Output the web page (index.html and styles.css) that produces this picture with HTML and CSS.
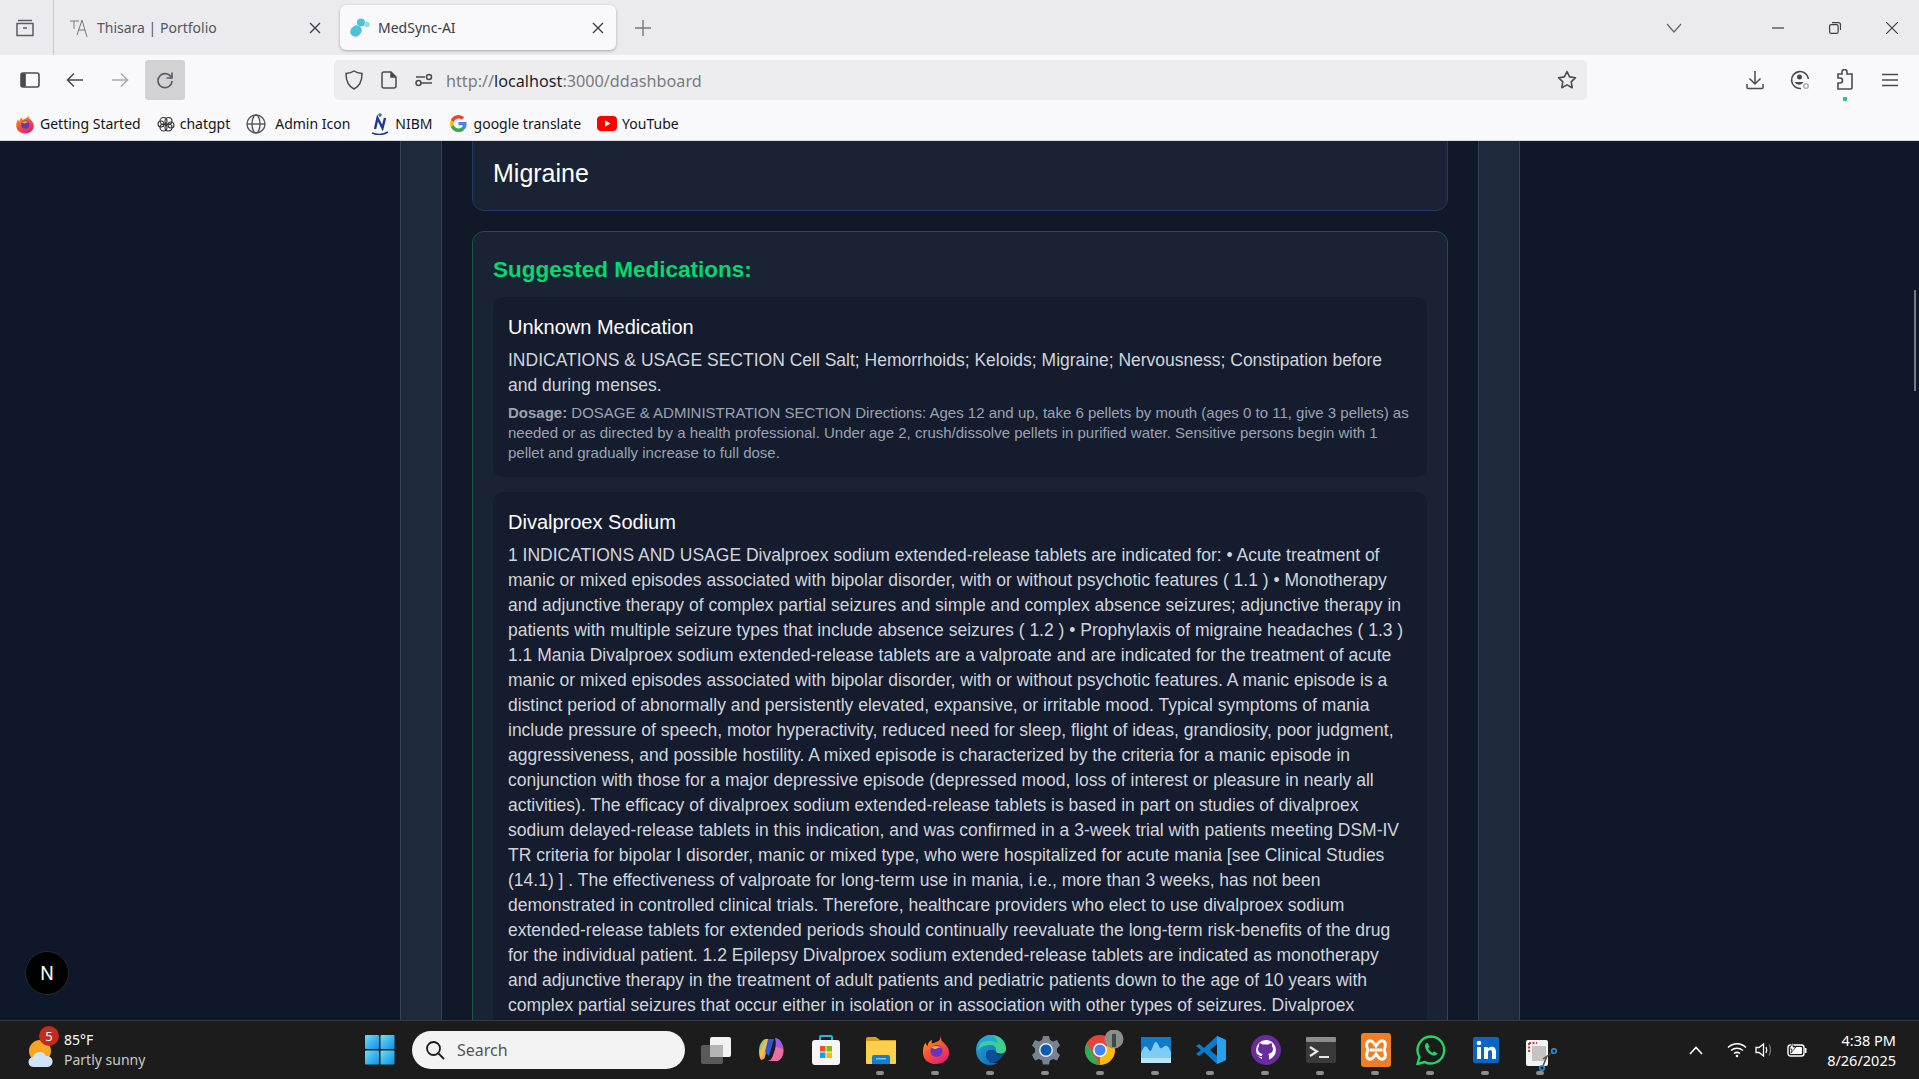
FILE: index.html
```html
<!DOCTYPE html>
<html lang="en">
<head>
    <meta charset="UTF-8">
    <meta name="viewport" content="width=device-width, initial-scale=1.0">
    <title>MedSync-AI</title>
    <link rel="stylesheet" href="styles.css">
</head>
<body>
    <svg class="defs" width="0" height="0">
        <defs>
            <linearGradient id="ffBody" x1="0" y1="0" x2="0.6" y2="1">
                <stop offset="0" stop-color="#ffb02e"/><stop offset="0.5" stop-color="#ff5a2c"/><stop offset="1" stop-color="#e3246a"/>
            </linearGradient>
            <linearGradient id="winTile" x1="0" y1="0" x2="1" y2="1">
                <stop offset="0" stop-color="#6fdcf5"/><stop offset="1" stop-color="#0f8fe8"/>
            </linearGradient>
            <linearGradient id="copilot" x1="0" y1="0" x2="1" y2="1">
                <stop offset="0" stop-color="#2fb5e8"/><stop offset="0.45" stop-color="#f4c63a"/><stop offset="1" stop-color="#e85fa4"/>
            </linearGradient>
            <linearGradient id="edgeBody" x1="0" y1="0" x2="1" y2="1">
                <stop offset="0" stop-color="#28a7e0"/><stop offset="1" stop-color="#0a5fb0"/>
            </linearGradient>
            <symbol id="firefox" viewBox="0 0 32 32">
                <path d="M21 1c1 3 0 5 3 7 3 3 6 6 6 11 0 7-6 12-14 12S2 26 2 18c0-4 1-7 3-10 0 2 1 3 2 4 0-3 2-6 5-7-1 2-1 3 0 4 3-1 5-2 7-3 2-2 2-3 2-5z" fill="url(#ffBody)"/>
                <circle cx="16.500" cy="17" r="6.500" fill="#6a33c2"/>
                <path d="M11 13c3-2 8-2 11 1-3-1-5 0-6 1-2 0-4-1-5-2z" fill="#ffa436"/>
            </symbol>
        </defs>
    </svg>

    <div class="screen">
        <!-- tab strip -->
        <header class="tabstrip">
            <div class="tabs-menu">
                <svg width="20" height="20" viewBox="0 0 20 20" fill="none" stroke="#5b5b66" stroke-width="1.500"><path d="M3 2.500h14M2 5.500h16v12H2z"/><path d="M8 10h4"/></svg>
            </div>
            <div class="tab">
                <svg class="tab-icon" width="20" height="20" viewBox="0 0 20 20" fill="none" stroke="#77777f" stroke-width="1"><path d="M1 3h9M5 3v8M13 2 8 17M13 2l5 17M9 12h7"/></svg>
                <span class="tab-title">Thisara | Portfolio</span>
                <svg class="tab-close" width="12" height="12" viewBox="0 0 12 12" stroke="#3d3d45" stroke-width="1.400"><path d="M1 1l10 10M11 1 1 11"/></svg>
            </div>
            <div class="tab tab-active">
                <svg class="tab-icon" width="20" height="20" viewBox="0 0 20 20" fill="#4fc0dc"><rect x="0" y="8" width="12" height="10" rx="5" transform="rotate(-40 6 13)"/><circle cx="11" cy="4.500" r="4"/><circle cx="17" cy="6.500" r="2.700" fill="#8fdcea"/></svg>
                <span class="tab-title">MedSync-AI</span>
                <svg class="tab-close" width="12" height="12" viewBox="0 0 12 12" stroke="#3d3d45" stroke-width="1.400"><path d="M1 1l10 10M11 1 1 11"/></svg>
            </div>
            <svg class="new-tab" width="16" height="16" viewBox="0 0 16 16" stroke="#77777f" stroke-width="1.400"><path d="M8 0v16M0 8h16"/></svg>
            <div class="strip-spacer"></div>
            <svg class="tab-list" width="16" height="10" viewBox="0 0 16 10" fill="none" stroke="#6b6b74" stroke-width="1.400"><path d="M1 1l7 8 7-8"/></svg>
            <div class="win-controls">
                <svg width="12" height="12" viewBox="0 0 12 12" stroke="#3d3d45" stroke-width="1.200"><path d="M0 6h12"/></svg>
                <svg width="12" height="12" viewBox="0 0 12 12" fill="none" stroke="#3d3d45" stroke-width="1.200"><rect x="0.600" y="2.600" width="8.500" height="8.800" rx="1.500"/><path d="M3 .7h6.500a2 2 0 0 1 2 2V8"/></svg>
                <svg width="12" height="12" viewBox="0 0 12 12" stroke="#3d3d45" stroke-width="1.200"><path d="M0 0l12 12M12 0 0 12"/></svg>
            </div>
        </header>

        <!-- toolbar -->
        <div class="toolbar">
            <div class="nav-buttons">
                <span class="nav-btn"><svg width="20" height="16" viewBox="0 0 20 16" fill="none" stroke="#4a4a52" stroke-width="1.600"><rect x="1" y="1" width="18" height="14" rx="2"/><path d="M2 2h3v12H2z" fill="#4a4a52"/></svg></span>
                <span class="nav-btn"><svg width="18" height="16" viewBox="0 0 18 16" fill="none" stroke="#4a4a52" stroke-width="1.600"><path d="M17 8H2M8 1.500 1.500 8 8 14.500"/></svg></span>
                <span class="nav-btn"><svg width="18" height="16" viewBox="0 0 18 16" fill="none" stroke="#a9a9ae" stroke-width="1.600"><path d="M1 8h15M10 1.500 16.500 8 10 14.500"/></svg></span>
                <span class="nav-btn nav-btn-on"><svg width="18" height="18" viewBox="0 0 18 18" fill="none" stroke="#5b5b66" stroke-width="1.600"><path d="M15.500 7A7 7 0 1 0 16 10"/><path d="M16 1.500V7h-5.500"/></svg></span>
            </div>
            <div class="urlbar">
                <svg class="url-icon" width="18" height="20" viewBox="0 0 18 20" fill="none" stroke="#4a4a52" stroke-width="1.500"><path d="M9 1c2 1.500 5 2.300 8 2.500 0 7-2 12.500-8 15.500C3 16 1 10.500 1 3.500 4 3.300 7 2.500 9 1z"/></svg>
                <svg class="url-icon" width="16" height="18" viewBox="0 0 16 18" fill="none" stroke="#4a4a52" stroke-width="1.500"><path d="M3 1h7l5 5v9a2 2 0 0 1-2 2H3a2 2 0 0 1-2-2V3a2 2 0 0 1 2-2z"/><path d="M10 1v5h5" fill="#4a4a52"/></svg>
                <svg class="url-icon" width="18" height="14" viewBox="0 0 18 14" fill="none" stroke="#4a4a52" stroke-width="1.500"><path d="M1 4h9M6 10h11"/><circle cx="14" cy="4" r="2.500"/><circle cx="3.500" cy="10" r="2.500"/></svg>
                <span class="url-text">http://<span class="url-host">localhost</span>:3000/ddashboard</span>
                <svg class="url-star" width="20" height="20" viewBox="0 0 20 20" fill="none" stroke="#4a4a52" stroke-width="1.600" stroke-linejoin="round"><path d="M10 1.500l2.600 5.400 5.900.8-4.300 4.100 1 5.900L10 14.900l-5.200 2.800 1-5.900L1.500 7.700l5.900-.8z"/></svg>
            </div>
            <div class="tool-right">
                <svg width="20" height="20" viewBox="0 0 20 20" fill="none" stroke="#4a4a52" stroke-width="1.500"><path d="M10 1v13M4.500 8.500 10 14l5.500-5.500M2 14v3.500a1 1 0 0 0 1 1h14a1 1 0 0 0 1-1V14"/></svg>
                <svg width="20" height="20" viewBox="0 0 20 20" fill="none" stroke="#4a4a52" stroke-width="1.600"><path d="M11 18.500a8.500 8.500 0 1 1 7.500-9.500"/><circle cx="9.500" cy="7" r="2.500" fill="#4a4a52" stroke="none"/><path d="M4.500 12h9a5 5 0 0 1-9 0z" fill="#4a4a52" stroke="none"/><circle cx="16" cy="16" r="2.300" stroke="#b4b4b8"/></svg>
                <div class="ext-btn">
                    <svg width="20" height="22" viewBox="0 0 20 22" fill="none" stroke="#4a4a52" stroke-width="1.600"><path d="M3 5h4V3a2.500 2.500 0 0 1 5 0v2h5v14a1 1 0 0 1-1 1H3v-6h2a2.500 2.500 0 0 0 0-5H3z"/></svg>
                    <span class="ext-dot"></span>
                </div>
                <svg width="20" height="14" viewBox="0 0 20 14" stroke="#4a4a52" stroke-width="1.500"><path d="M2 1.500h16M2 7h16M2 12.500h16"/></svg>
            </div>
        </div>

        <!-- bookmarks -->
        <nav class="bookmarks">
            <a class="bookmark"><svg width="20" height="20"><use href="#firefox"/></svg>Getting Started</a>
            <a class="bookmark"><svg width="18" height="18" viewBox="0 0 18 18" fill="none" stroke="#333" stroke-width="1.100"><circle cx="6.500" cy="6" r="3.500"/><circle cx="11.500" cy="6" r="3.500"/><circle cx="14" cy="10" r="3"/><circle cx="11.500" cy="12.500" r="3.500"/><circle cx="6.500" cy="12.500" r="3.500"/><circle cx="4" cy="9" r="3"/></svg>chatgpt</a>
            <a class="bookmark bookmark-wide"><svg width="20" height="20" viewBox="0 0 20 20" fill="none" stroke="#55555e" stroke-width="1.400"><circle cx="10" cy="10" r="9"/><ellipse cx="10" cy="10" rx="4" ry="9"/><path d="M1 10h18"/></svg>Admin Icon</a>
            <a class="bookmark bookmark-nibm"><svg width="20" height="22" viewBox="0 0 20 22" fill="none"><path d="M10 0v4M8 2h4" stroke="#1d3a8f"/><path d="M2 20c5 2 11 2 16-1" stroke="#1d3a8f" stroke-width="1.500"/><path d="M5 16 7.500 5 12.500 15 15 5" stroke="#1d3a8f" stroke-width="2.400"/></svg>NIBM</a>
            <a class="bookmark bookmark-google"><svg width="17" height="17" viewBox="0 0 18 18"><path d="M17.600 9.200c0-.6-.1-1.200-.2-1.800H9v3.400h4.800a4.100 4.100 0 0 1-1.800 2.700v2.200h2.900c1.700-1.600 2.700-3.900 2.700-6.500z" fill="#4285f4"/><path d="M9 18c2.400 0 4.500-.8 5.900-2.200L12 13.500c-.8.500-1.800.9-3 .9-2.300 0-4.300-1.600-5-3.700H1v2.300A9 9 0 0 0 9 18z" fill="#34a853"/><path d="M4 10.700a5.400 5.400 0 0 1 0-3.400V5H1a9 9 0 0 0 0 8z" fill="#fbbc05"/><path d="M9 3.600c1.300 0 2.500.5 3.400 1.300L15 2.400A9 9 0 0 0 1 5l3 2.300c.7-2.100 2.700-3.700 5-3.700z" fill="#ea4335"/></svg>google translate</a>
            <a class="bookmark"><svg width="20" height="15" viewBox="0 0 20 15"><rect width="20" height="15" rx="4" fill="#f00"/><path d="M8 4.300v6.400l5.500-3.200z" fill="#fff"/></svg>YouTube</a>
        </nav>

        <!-- page -->
        <main class="viewport">
            <div class="page-frame">
                <div class="page-inner">
                    <section class="card card-blue">
                        <h2 class="diagnosis">Migraine</h2>
                    </section>
                    <section class="card card-green">
                        <h3 class="card-heading">Suggested Medications:</h3>
                        <article class="med">
                            <h4 class="med-name">Unknown Medication</h4>
                            <p class="med-desc">INDICATIONS &amp; USAGE SECTION Cell Salt; Hemorrhoids; Keloids; Migraine; Nervousness; Constipation before and during menses.</p>
                            <p class="med-dose"><strong>Dosage:</strong> DOSAGE &amp; ADMINISTRATION SECTION Directions: Ages 12 and up, take 6 pellets by mouth (ages 0 to 11, give 3 pellets) as needed or as directed by a health professional. Under age 2, crush/dissolve pellets in purified water. Sensitive persons begin with 1 pellet and gradually increase to full dose.</p>
                        </article>
                        <article class="med">
                            <h4 class="med-name">Divalproex Sodium</h4>
                            <p class="med-desc">1 INDICATIONS AND USAGE Divalproex sodium extended-release tablets are indicated for: • Acute treatment of manic or mixed episodes associated with bipolar disorder, with or without psychotic features ( 1.1 ) • Monotherapy and adjunctive therapy of complex partial seizures and simple and complex absence seizures; adjunctive therapy in patients with multiple seizure types that include absence seizures ( 1.2 ) • Prophylaxis of migraine headaches ( 1.3 ) 1.1 Mania Divalproex sodium extended-release tablets are a valproate and are indicated for the treatment of acute manic or mixed episodes associated with bipolar disorder, with or without psychotic features. A manic episode is a distinct period of abnormally and persistently elevated, expansive, or irritable mood. Typical symptoms of mania include pressure of speech, motor hyperactivity, reduced need for sleep, flight of ideas, grandiosity, poor judgment, aggressiveness, and possible hostility. A mixed episode is characterized by the criteria for a manic episode in conjunction with those for a major depressive episode (depressed mood, loss of interest or pleasure in nearly all activities). The efficacy of divalproex sodium extended-release tablets is based in part on studies of divalproex sodium delayed-release tablets in this indication, and was confirmed in a 3-week trial with patients meeting DSM-IV TR criteria for bipolar I disorder, manic or mixed type, who were hospitalized for acute mania [see Clinical Studies (14.1) ] . The effectiveness of valproate for long-term use in mania, i.e., more than 3 weeks, has not been demonstrated in controlled clinical trials. Therefore, healthcare providers who elect to use divalproex sodium extended-release tablets for extended periods should continually reevaluate the long-term risk-benefits of the drug for the individual patient. 1.2 Epilepsy Divalproex sodium extended-release tablets are indicated as monotherapy and adjunctive therapy in the treatment of adult patients and pediatric patients down to the age of 10 years with complex partial seizures that occur either in isolation or in association with other types of seizures. Divalproex</p>
                        </article>
                    </section>
                </div>
            </div>
            <button class="next-badge">N</button>
            <span class="page-scroll"></span>
        </main>

        <!-- windows taskbar -->
        <footer class="taskbar">
            <div class="weather">
                <div class="weather-icon">
                    <svg width="28" height="28" viewBox="0 0 28 28"><circle cx="13" cy="11" r="11" fill="#f6a623"/><path d="M7 27a5 5 0 0 1-1-10 7 7 0 0 1 13-1 5.500 5.500 0 0 1 2 11z" fill="#cfe3fa"/></svg>
                    <span class="weather-badge">5</span>
                </div>
                <div class="weather-text">
                    <span>85°F</span>
                    <span class="weather-sub">Partly sunny</span>
                </div>
            </div>
            <div class="task-center">
                <svg class="start" width="30" height="30" viewBox="0 0 30 30" fill="url(#winTile)"><rect width="14" height="14" rx="1"/><rect x="15.500" width="14" height="14" rx="1"/><rect y="15.500" width="14" height="14" rx="1"/><rect x="15.500" y="15.500" width="14" height="14" rx="1"/></svg>
                <div class="search">
                    <svg width="20" height="20" viewBox="0 0 20 20" fill="none" stroke="#1c1c1c" stroke-width="1.800"><circle cx="8.500" cy="8.500" r="6.500"/><path d="M13.500 13.500 19 19"/></svg>
                    <span>Search</span>
                </div>
                <div class="task-apps">
                    <span class="app">
                        <svg width="32" height="30" viewBox="0 0 32 30"><rect x="1" y="10" width="22" height="19" rx="2" fill="#5a5a5a"/><rect x="10" y="2" width="21" height="20" rx="2" fill="#f2f2f2"/><rect x="10" y="10" width="13" height="12" fill="#b5b5b5"/></svg>
                    </span>
                    <span class="app">
                        <svg width="30" height="30" viewBox="0 0 30 30" fill="none"><path d="M5 25C1 18 3 5 10 4h3l-4 18c-.5 2-2 3-4 3z" fill="url(#copilot)"/><path d="M19 3c3 0 6 2 8 8 2 7-1 15-7 15h-9c3 0 5-2 6-5l2-7c1-4 1-8 0-11z" fill="#a05ce0"/><path d="M11 26c3 0 5-2 6-5l3-9 7 2c1 6-2 12-7 12z" fill="#ef6c9e"/><path d="M12 4h6l-5 17-4-4z" fill="#2d55d8"/></svg>
                    </span>
                    <span class="app">
                        <svg width="30" height="32" viewBox="0 0 30 32"><path d="M9 7V3a1 1 0 0 1 1-1h10a1 1 0 0 1 1 1v4" fill="none" stroke="#26b4e8" stroke-width="2"/><rect x="1" y="6" width="28" height="25" rx="3" fill="#f5f5f5"/><rect x="9" y="12" width="5.500" height="5.500" fill="#f25022"/><rect x="15.500" y="12" width="5.500" height="5.500" fill="#7fba00"/><rect x="9" y="18.500" width="5.500" height="5.500" fill="#00a4ef"/><rect x="15.500" y="18.500" width="5.500" height="5.500" fill="#ffb900"/></svg>
                    </span>
                    <span class="app app-open">
                        <svg width="30" height="28" viewBox="0 0 30 28"><path d="M0 3a2 2 0 0 1 2-2h8l4 3h16v6H0z" fill="#d99e0c"/><rect y="5" width="30" height="23" rx="1" fill="#fcd04d"/><path d="M6 28v-7a2 2 0 0 1 2-2h14a2 2 0 0 1 2 2v7z" fill="#0f7fd6"/><rect x="10" y="22" width="10" height="1.500" fill="#7cc4f4"/></svg>
                    </span>
                    <span class="app app-open"><svg width="30" height="30"><use href="#firefox"/></svg></span>
                    <span class="app app-open">
                        <svg width="30" height="30" viewBox="0 0 30 30"><path d="M15 0C6 0 0 7 0 15c0 9 7 15 14 15 3 0 6-1 8-2-6 1-12-3-12-8 0-3 2-5 5-5 5 0 5 3 5 3h8c1-1 2-2 2-4C30 6 24 0 15 0z" fill="url(#edgeBody)"/><path d="M15 0c8 0 15 6 15 14 0 2-1 3-2 4-4 2-8 0-8-3s-2-5-5-5C8 10 4 12 2 16 3 7 8 0 15 0z" fill="#3fcf8e"/><path d="M15 0C8 0 3 5 1 12c2-4 7-6 12-6 4 0 7 1 9 3-1-5-4-9-7-9z" fill="#1fa8d8"/><path d="M10 20c0-3 2-5 5-5 3 0 5 2 5 3 2 2 6 2 8 0-2 5-6 10-14 10-2-3-4-5-4-8z" fill="#0c4f96"/></svg>
                    </span>
                    <span class="app app-open">
                        <svg width="30" height="30" viewBox="0 0 30 30"><path d="M12 1h6l1 4 3 1.500 4-1.500 3 5.500-3 3v3.500l3 3-3 5.500-4-1.500-3 1.500-1 4h-6l-1-4L8 24l-4 1.500-3-5.500 3-3v-3.500l-3-3L4 5l4 1.500L11 5z" fill="#77838f"/><circle cx="15" cy="15" r="7" fill="#e4e8ec"/><circle cx="15" cy="15" r="5.500" fill="#0f5cae"/></svg>
                    </span>
                    <span class="app app-open">
                        <svg class="app-chrome" width="40" height="36" viewBox="0 0 40 36"><circle cx="16" cy="20" r="15" fill="#ea4335"/><path d="M16 35a15 15 0 0 0 15-15c0-3-1-5-2-7.500L16 20z" fill="#fbbc05"/><path d="M16 35A15 15 0 0 1 3 12.500l8 14z" fill="#34a853"/><circle cx="16" cy="20" r="7" fill="#fff"/><circle cx="16" cy="20" r="5.500" fill="#4285f4"/><circle cx="30" cy="9" r="9.500" fill="#8a9088"/><rect x="28" y="4" width="4" height="13" fill="#3c4a4a"/></svg>
                    </span>
                    <span class="app app-open">
                        <svg width="30" height="26" viewBox="0 0 30 26"><rect width="30" height="26" fill="#0f7ac8"/><path d="M0 16c4-9 5-8 8-3s4-9 7-8 3 8 6 6 5-5 9 4v11H0z" fill="#7dcdf8"/><path d="M0 21h30v5H0z" fill="#b8e4fc"/></svg>
                    </span>
                    <span class="app app-open">
                        <svg width="30" height="30" viewBox="0 0 30 30"><path d="M21 1 30 5v20l-9 4L8 17l-5 4-3-2 5-4-5-4 3-2 5 4z" fill="#0a7acb"/><path d="M21 1 30 5v20l-9 4z" fill="#28a0ee"/><path d="M21 9l-7 6 7 6z" fill="#1c1c1c"/></svg>
                    </span>
                    <span class="app app-open">
                        <svg width="30" height="30" viewBox="0 0 30 30"><circle cx="15" cy="15" r="15" fill="#6a2b9e"/><circle cx="15" cy="15" r="10" fill="#fff"/><path d="M11 25v-3c-3 .5-4-1-5-3 1 0 2 1 3 2h2c0-1 0-2 1-2-3-.5-5-2-5-5 0-1 .5-2 1-3 0-1 0-2 .5-3 1 0 2 .5 3 1.500h6c1-1 2-1.500 3-1.500.5 1 .5 2 .5 3 .5 1 1 2 1 3 0 3-2 4.500-5 5 1 .5 1 1.500 1 2.500V25z" fill="#6a2b9e"/></svg>
                    </span>
                    <span class="app app-open">
                        <svg width="30" height="26" viewBox="0 0 30 26"><rect width="30" height="26" rx="2" fill="#3a3a3a"/><rect width="30" height="5" rx="1" fill="#8c8c8c"/><path d="M4 10l7 4.500-7 4.500" fill="none" stroke="#e8e8e8" stroke-width="2.200"/><path d="M13 20h10" stroke="#e8e8e8" stroke-width="2"/></svg>
                    </span>
                    <span class="app app-open">
                        <svg width="30" height="34" viewBox="0 0 30 34"><rect width="30" height="34" rx="3" fill="#f17d24"/><path d="M8 8c3-1 5 2 7 5 2-3 4-6 7-5 3 1 3 5 1 9 2 4 2 8-1 9-3 1-5-2-7-5-2 3-4 6-7 5-3-1-3-5-1-9-2-4-2-8 1-9z" fill="none" stroke="#fff" stroke-width="3"/><path d="M9 17h12" stroke="#fff" stroke-width="3"/></svg>
                    </span>
                    <span class="app app-open">
                        <svg width="30" height="30" viewBox="0 0 30 30"><path d="M15 1.500A13.500 13.500 0 0 0 3.500 22L1.500 29l7.200-1.900A13.500 13.500 0 1 0 15 1.500z" fill="none" stroke="#25d366" stroke-width="2.400"/><path d="M10.500 8c-1.500 1-2 3-1 5.500 1.200 3.200 4 6 7.500 7 2 .5 3.800-.5 4.500-2l-3.500-2.200-1.500 1.500c-2-.8-3.500-2.500-4.300-4.300l1.300-1.500L11.800 8z" fill="#25d366"/></svg>
                    </span>
                    <span class="app app-open">
                        <svg width="26" height="26" viewBox="0 0 26 26"><rect width="26" height="26" rx="2" fill="#0a66c2"/><rect x="4" y="10" width="4" height="12" fill="#fff"/><circle cx="6" cy="6" r="2.300" fill="#fff"/><path d="M11 10h3.800v1.700c.8-1.200 2-2 3.800-2 3 0 4.400 1.900 4.400 5V22h-4v-6.500c0-1.600-.6-2.500-1.900-2.500-1.400 0-2.100 1-2.100 2.500V22h-4z" fill="#fff"/></svg>
                    </span>
                    <span class="app app-open">
                        <svg class="app-snip" width="32" height="36" viewBox="0 0 32 36"><rect x="1" y="5" width="22" height="26" rx="2" fill="#f3f3f3"/><rect x="7" y="11" width="14" height="15" fill="#c4c4c4"/><path d="M4 8h8M4 8v10" stroke="#d43b2e" stroke-width="2" stroke-dasharray="2 1.500" fill="none"/><path d="M18 24 28 17M22 21l-4 10" stroke="#4a4a4a" stroke-width="1.500"/><circle cx="29" cy="16" r="2.300" fill="none" stroke="#2b8fd8" stroke-width="1.600"/><circle cx="17" cy="33" r="2.300" fill="none" stroke="#2b8fd8" stroke-width="1.600"/></svg>
                    </span>
                </div>
            </div>
            <div class="tray">
                <svg width="14" height="9" viewBox="0 0 14 9" fill="none" stroke="#fff" stroke-width="1.600"><path d="M1 8l6-6.500L13 8"/></svg>
                <svg class="tray-wifi" width="20" height="16" viewBox="0 0 20 16" fill="none" stroke="#fff" stroke-width="1.500"><path d="M1 5.500c5-5 13-5 18 0M4 8.500c3.500-3 8.500-3 12 0M7 11.500c2-1.500 4-1.500 6 0"/><circle cx="10" cy="14" r="1.300" fill="#fff" stroke="none"/></svg>
                <svg class="tray-vol" width="20" height="18" viewBox="0 0 20 18" fill="none" stroke="#fff" stroke-width="1.300"><path d="M1 6.500h3L8.500 3v12L4 11.500H1z"/><path d="M11 6c1 2 1 4 0 6"/><path d="M14 3.500c2 3 2 8 0 11" stroke="#777"/></svg>
                <svg class="tray-batt" width="20" height="16" viewBox="0 0 20 16" fill="#fff"><rect x="1" y="3" width="16" height="11" rx="2.500" fill="none" stroke="#fff" stroke-width="1.400"/><rect x="3" y="5" width="12" height="7" rx="1"/><rect x="18" y="6" width="1.500" height="5"/><path d="M6 0 2 7h3L4 11l5-6H6z" stroke="#1c1c1c" stroke-width="0.800"/></svg>
                <div class="clock">
                    <span>4:38 PM</span>
                    <span>8/26/2025</span>
                </div>
            </div>
        </footer>
    </div>
</body>
</html>
```

FILE: styles.css
```css
* {
    box-sizing: border-box;
}

html, body {
    margin: 0;
    padding: 0;
    height: 100%;
    overflow: hidden;
}

body {
    font-family: "Noto Sans", sans-serif;
    background-color: #0f172a;
}

.defs {
    display: block;
    height: 0;
}

.screen {
    display: flex;
    flex-direction: column;
    height: 100vh;
}

/* tab strip */
.tabstrip {
    display: flex;
    align-items: center;
    height: 55px;
    flex-shrink: 0;
    background-color: #ebebef;
    padding-right: 21px;
    font-size: 14px;
    color: #2b2a33;
}

.tabs-menu {
    display: flex;
    align-items: center;
    justify-content: center;
    width: 54px;
    height: 55px;
    padding-right: 4px;
    border-right: 1px solid #c9c9ce;
}

.tab {
    display: flex;
    align-items: center;
    width: 271px;
    height: 45px;
    margin-left: 5px;
    margin-right: 10px;
    padding: 0 9px 0 10px;
    border-radius: 6px;
}

.tab-active {
    width: 276px;
    margin-left: 0;
    padding-right: 12px;
    background-color: #f9f9fb;
    box-shadow: 0 1px 3px rgba(0, 0, 0, 0.3);
}

.tab-icon {
    flex-shrink: 0;
}

.tab-title {
    flex: 1;
    margin-left: 8px;
    font-size: 14px;
    white-space: nowrap;
    color: #55555e;
}

.tab-active .tab-title {
    color: #3a3a42;
}

.tab-close {
    flex-shrink: 0;
}

.new-tab {
    margin-left: 9px;
}

.strip-spacer {
    flex: 1;
}

.tab-list {
    margin-right: 90px;
}

.win-controls {
    display: flex;
    align-items: center;
    gap: 45px;
}

/* toolbar */
.toolbar {
    display: flex;
    align-items: center;
    height: 51px;
    flex-shrink: 0;
    background-color: #f9f9fb;
    padding: 5px 0 6px;
}

.nav-buttons {
    display: flex;
    width: 334px;
    padding-left: 10px;
    gap: 5px;
}

.nav-btn {
    display: flex;
    align-items: center;
    justify-content: center;
    width: 40px;
    height: 40px;
    border-radius: 3px;
}

.nav-btn-on {
    background-color: #d2d2d5;
}

.urlbar {
    display: flex;
    align-items: center;
    width: 1253px;
    height: 40px;
    padding: 0 10px 0 11px;
    border-radius: 5px;
    background-color: #ededf0;
}

.url-icon {
    margin-right: 18px;
}

.url-icon:nth-of-type(3) {
    margin-right: 13px;
}

.url-text {
    flex: 1;
    padding-top: 2px;
    font-size: 16.200px;
    color: #7a7a82;
}

.url-host {
    color: #1f1f24;
}

.tool-right {
    display: flex;
    align-items: center;
    gap: 25px;
    padding-left: 158px;
}

.ext-btn {
    display: flex;
    position: relative;
}

.ext-dot {
    position: absolute;
    left: 8px;
    top: 28px;
    width: 4px;
    height: 4px;
    background-color: #2ac3a2;
}

/* bookmarks */
.bookmarks {
    display: flex;
    align-items: center;
    height: 35px;
    flex-shrink: 0;
    padding: 1px 0 0 15px;
    gap: 16px;
    background-color: #f9f9fb;
    border-bottom: 1px solid #dcdce0;
    font-size: 14px;
    color: #15141a;
}

.bookmark {
    display: flex;
    align-items: center;
    gap: 5px;
    white-space: nowrap;
}

.bookmark-wide {
    gap: 9px;
    margin-right: 4px;
}

.bookmark-nibm {
    margin-right: 1px;
}

.bookmark-google {
    gap: 7px;
}

/* page */
.viewport {
    position: relative;
    flex: 1;
    min-height: 0;
    overflow: hidden;
    background-color: #0f172a;
    font-family: "Liberation Sans", Arial, sans-serif;
}

.page-frame {
    width: 1120px;
    height: 100%;
    margin-left: 400px;
    padding: 0 40px;
    background-color: #1e293b;
    border-left: 1px solid #334155;
    border-right: 1px solid #334155;
}

.page-inner {
    height: 100%;
    padding: 0 30px;
    background-color: #111827;
    border-left: 1px solid #334155;
    border-right: 1px solid #334155;
    overflow: hidden;
}

.card {
    background-color: #1a2333;
    border-radius: 12px;
    padding: 0 20px;
}

.card-blue {
    margin-top: -20px;
    margin-bottom: 20px;
    height: 90px;
    padding-top: 35px;
    border: 1px solid #1e3a6e;
}

.card-green {
    padding-top: 22px;
    border: 1px solid #14583f;
}

.diagnosis {
    margin: 0;
    font-size: 25px;
    font-weight: 400;
    line-height: 32px;
    color: #fff;
}

.card-heading {
    margin: 0 0 11px;
    font-size: 22.500px;
    line-height: 32px;
    font-weight: 700;
    color: #00d96f;
}

.med {
    margin-bottom: 15px;
    padding: 15px 15px 14px;
    background-color: #141c2e;
    border-radius: 10px;
}

.med-name {
    margin: 0 0 6px;
    font-size: 20px;
    line-height: 30px;
    font-weight: 400;
    color: #fff;
}

.med-desc {
    margin: 0;
    font-size: 17.500px;
    line-height: 25px;
    color: #d1d5db;
}

.med-dose {
    margin: 5px 0 0;
    font-size: 15px;
    line-height: 20px;
    color: #9ca3af;
}

.next-badge {
    position: absolute;
    left: 25px;
    bottom: 25px;
    width: 44px;
    height: 44px;
    border: 1px solid #2a2a2a;
    border-radius: 50%;
    background-color: #000;
    color: #fff;
    font-family: "Inter", sans-serif;
    font-size: 18px;
    font-weight: 400;
}

.page-scroll {
    position: absolute;
    right: 3px;
    top: 149px;
    width: 2px;
    height: 101px;
    background-color: #7a7a7a;
}

/* taskbar */
.taskbar {
    display: flex;
    align-items: center;
    height: 59px;
    flex-shrink: 0;
    background-color: #1c1c1c;
    border-top: 1px solid #3a3a3a;
    color: #fff;
}

.weather {
    display: flex;
    align-items: center;
    width: 364px;
    padding-left: 27px;
    gap: 9px;
}

.weather-icon {
    position: relative;
    display: flex;
    margin-top: 8px;
}

.weather-badge {
    position: absolute;
    left: 12px;
    top: -14px;
    width: 20px;
    height: 20px;
    border-radius: 50%;
    background-color: #c42b1c;
    font-size: 13px;
    line-height: 20px;
    text-align: center;
}

.weather-text {
    display: flex;
    flex-direction: column;
    font-size: 14px;
    line-height: 20px;
}

.weather-sub {
    color: #c9c9c9;
}

.task-center {
    display: flex;
    align-items: center;
    flex: 1;
}

.start {
    flex-shrink: 0;
    margin-left: 1px;
    margin-right: 17px;
}

.search {
    display: flex;
    align-items: center;
    gap: 12px;
    flex-shrink: 0;
    width: 273px;
    height: 38px;
    padding-left: 13px;
    border-radius: 19px;
    background-color: #f3f3f3;
    font-size: 16px;
    color: #555;
}

.task-apps {
    display: flex;
    margin-left: 3px;
}

.app {
    position: relative;
    display: flex;
    align-items: center;
    justify-content: center;
    width: 55px;
    height: 56px;
}

.app-open::after {
    content: "";
    position: absolute;
    left: 23px;
    bottom: 3px;
    width: 8px;
    height: 4px;
    border-radius: 2px;
    background-color: #8c8c8c;
}

.app-chrome {
    margin-left: 6px;
    margin-bottom: 4px;
}

.app-snip {
    margin-top: 6px;
}

.tray {
    display: flex;
    align-items: center;
    width: 230px;
    padding-right: 23px;
}

.tray-wifi {
    margin-left: 24px;
}

.tray-vol {
    margin-left: 8px;
}

.tray-batt {
    margin-left: 12px;
}

.clock {
    display: flex;
    flex: 1;
    flex-direction: column;
    align-items: flex-end;
    font-size: 14.500px;
    line-height: 20px;
}
```
